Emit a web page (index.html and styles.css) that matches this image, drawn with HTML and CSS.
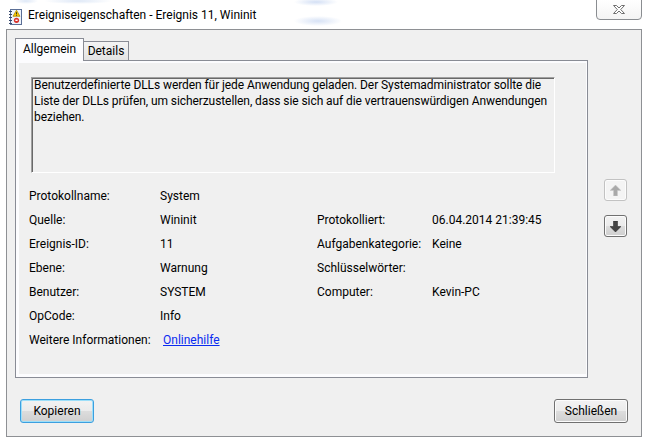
FILE: index.html
```html
<!DOCTYPE html>
<html>
<head>
  <meta charset="UTF-8">
  <title>Ereigniseigenschaften - Ereignis 11, Wininit</title>
  <link rel="stylesheet" href="styles.css">
</head>
<body>
  <div class="window">
    <div class="titlebar">
      <svg class="app-icon" viewBox="0 0 14 16" width="14" height="16">
        <rect x="2.5" y="0.5" width="11" height="15" fill="#eef3fb" stroke="#5b6f96"/>
        <path d="M1 2.5h3M1 5.5h3M1 8.5h3M1 11.5h3M1 14.5h3" stroke="#34466c"/>
        <path d="M8.5 1.2 L12 7.3 H5 Z" fill="#f6c800" stroke="#a77f00" stroke-width="0.7"/>
        <path d="M8.5 3.2v2.2M8.5 6v0.7" stroke="#222" stroke-width="0.9"/>
        <circle cx="8.5" cy="11.3" r="2.6" fill="#d8322c"/>
        <rect x="7.4" y="10.6" width="2.2" height="1.4" fill="#fff"/>
      </svg>
      <span class="title">Ereigniseigenschaften - Ereignis 11, Wininit</span>
      <button class="close">
        <svg viewBox="0 0 12 9" width="12" height="9">
          <path d="M0.5 0.5H3.5L6 3L8.5 0.5H11.5L7.7 4.5L11.5 8.5H8.5L6 6L3.5 8.5H0.5L4.3 4.5Z" fill="#fff" stroke="#6f6f6f"/>
        </svg>
      </button>
    </div>

    <div class="client">
      <div class="main">
        <div class="tabs">
          <div class="tabstrip">
            <div class="tab active">Allgemein</div>
            <div class="tab">Details</div>
          </div>
          <div class="panel">
            <div class="page">
              <div class="description">
                <p>Benutzerdefinierte DLLs werden für jede Anwendung geladen. Der Systemadministrator sollte die<br>Liste der DLLs prüfen, um sicherzustellen, dass sie sich auf die vertrauenswürdigen Anwendungen<br>beziehen.</p>
              </div>
              <div class="fields">
                <span>Protokollname:</span><span>System</span><span></span><span></span>
                <span>Quelle:</span><span>Wininit</span><span>Protokolliert:</span><span>06.04.2014 21:39:45</span>
                <span>Ereignis-ID:</span><span>11</span><span>Aufgabenkategorie:</span><span>Keine</span>
                <span>Ebene:</span><span>Warnung</span><span>Schlüsselwörter:</span><span></span>
                <span>Benutzer:</span><span>SYSTEM</span><span>Computer:</span><span>Kevin-PC</span>
                <span>OpCode:</span><span>Info</span><span></span><span></span>
                <span>Weitere Informationen:</span><span><a class="link" href="#">Onlinehilfe</a></span><span></span><span></span>
              </div>
            </div>
          </div>
        </div>
        <div class="nav">
          <button class="arrow" disabled>
            <svg viewBox="0 0 11 11" width="11" height="11"><path d="M3.5 11H7.5V5.5H11L5.5 0L0 5.5H3.5Z" fill="#a9a9a9" stroke="#c8c8c8" stroke-width="0.5"/></svg>
          </button>
          <button class="arrow">
            <svg viewBox="0 0 11 11" width="11" height="11"><path d="M3.5 0H7.5V5.5H11L5.5 11L0 5.5H3.5Z" fill="#444" stroke="#222" stroke-width="0.5"/></svg>
          </button>
        </div>
      </div>
      <div class="buttons">
        <button class="btn default">Kopieren</button>
        <button class="btn">Schließen</button>
      </div>
    </div>
  </div>
</body>
</html>
```

FILE: styles.css
```css
* {
  box-sizing: border-box;
}
body {
  margin: 0;
  background: #fff;
  font-family: "Segoe UI", Roboto, sans-serif;
  font-size: 12px;
  color: #000;
}
.window {
  width: 647px;
  height: 438px;
  overflow: hidden;
  display: flex;
  flex-direction: column;
  background:
    radial-gradient(ellipse 12px 3px at 26px 1px, rgba(120, 160, 220, .25), transparent),
    radial-gradient(ellipse 34px 3px at 78px 1px, rgba(120, 160, 220, .25), transparent),
    radial-gradient(ellipse 22px 4px at 316px 2px, rgba(110, 150, 220, .3), transparent),
    radial-gradient(ellipse 24px 5px at 318px 21px, rgba(110, 150, 220, .28), transparent),
    #fff;
}

/* title bar */
.titlebar {
  height: 29px;
  flex-shrink: 0;
  display: flex;
  align-items: flex-start;
}
.app-icon {
  margin: 9px 0 0 8px;
}
.title {
  margin: 7px 0 0 6px;
  line-height: 16px;
}
.close {
  margin: -1px 5px 0 auto;
  width: 46px;
  height: 21px;
  padding: 0;
  border: 1px solid #8a8d91;
  border-radius: 0 0 4px 4px;
  background: linear-gradient(#fff, #f4f4f4);
  display: flex;
  align-items: center;
  justify-content: center;
}

/* dialog body */
.client {
  margin-left: 6px;
  width: 636px;
  height: 408px;
  border: 1px solid #8e9094;
  background: #f0f0f0;
  display: flex;
  flex-direction: column;
}
.main {
  display: flex;
  padding: 8px 0 0 8px;
}
.tabs {
  width: 573px;
}
.tabstrip {
  display: flex;
  align-items: flex-end;
  height: 22px;
}
.tab {
  width: 46px;
  height: 19px;
  margin-left: -1px;
  border: 1px solid #898c95;
  border-bottom: none;
  background: linear-gradient(#f4f4f4, #e3e3e3);
  line-height: 18px;
  text-align: center;
}
.tab.active {
  width: 69px;
  height: 23px;
  margin-left: 0;
  margin-bottom: -1px;
  background: #fcfcfe;
  line-height: 20px;
  position: relative;
  z-index: 1;
}
.panel {
  height: 318px;
  border: 1px solid #898c95;
  background: #fcfcfe;
  padding: 2px 1px 3px 3px;
}
.page {
  height: 100%;
  background: #f0f0f0;
  padding: 14px 0 0 12px;
}
.description {
  width: 524px;
  height: 96px;
  border: 1px solid;
  border-color: #a0a0a0 #fff #fff #a0a0a0;
  box-shadow: inset 1px 1px 0 #696969;
  padding: 0 2px;
  line-height: 16px;
}
.description p {
  margin: -1px 0 0;
  white-space: nowrap;
  letter-spacing: -0.08px;
}
.fields {
  display: grid;
  grid-template-columns: 131px 157px 115px 1fr;
  grid-auto-rows: 24px;
  line-height: 24px;
  margin: 11px 0 0 -2px;
  white-space: nowrap;
}
.link {
  margin-left: 3px;
  color: #0a2bf0;
}

/* previous / next event */
.nav {
  display: flex;
  flex-direction: column;
  gap: 14px;
  margin: 141px 0 0 16px;
}
.arrow {
  width: 23px;
  height: 22px;
  padding: 0;
  border: 1px solid #707070;
  border-radius: 3px;
  background: linear-gradient(#f2f2f2, #ebebeb 50%, #dddddd 50%, #cfcfcf);
  box-shadow: inset 0 0 0 1px #fcfcfc;
  display: flex;
  align-items: center;
  justify-content: center;
}
.arrow:disabled {
  border-color: #c2c2c2;
  background: #f4f4f4;
}

.buttons {
  margin-top: auto;
  display: flex;
  justify-content: space-between;
  padding: 0 13px 13px;
}
.btn {
  width: 74px;
  height: 24px;
  padding: 0;
  font: inherit;
  color: #000;
  border: 1px solid #707070;
  border-radius: 3px;
  background: linear-gradient(#f2f2f2, #ebebeb 50%, #dddddd 50%, #cfcfcf);
  box-shadow: inset 0 0 0 1px #fcfcfc;
}
.btn.default {
  border-color: #3c9fdf;
  box-shadow: inset 0 0 0 1px #9ddff9;
}
```
